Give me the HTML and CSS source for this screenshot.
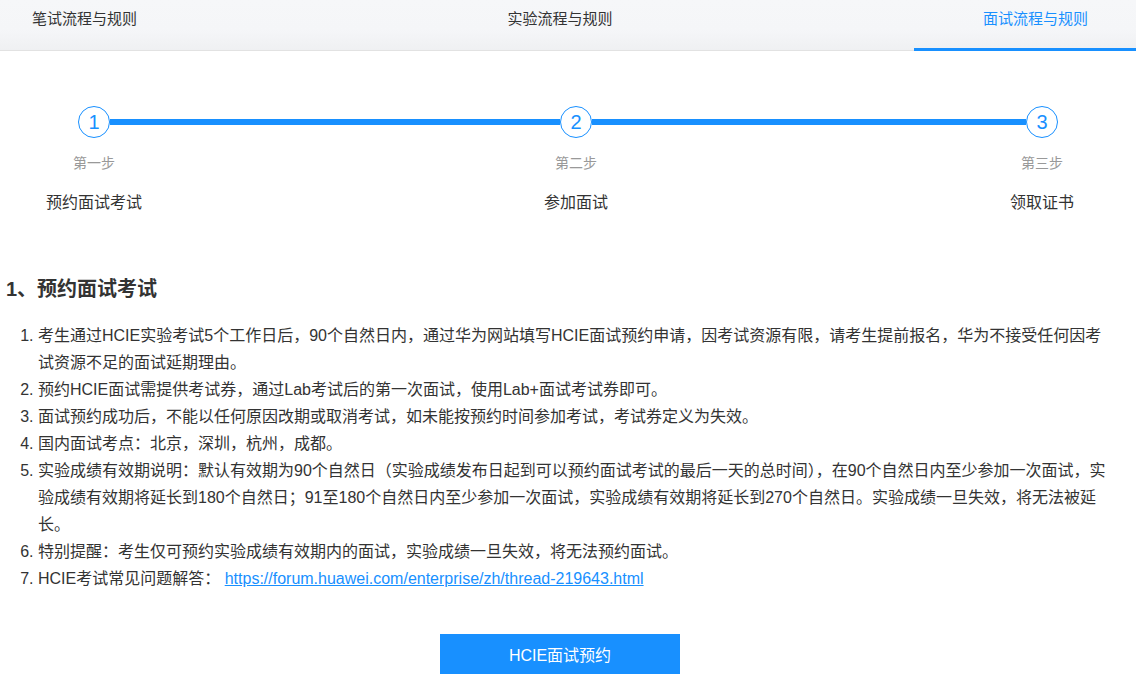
FILE: index.html
```html
<!DOCTYPE html>
<html lang="zh-CN">
<head>
<meta charset="utf-8">
<title>面试流程与规则</title>
<link rel="stylesheet" href="styles.css">
</head>
<body>
<nav class="tabs">
  <div class="tab tab-first">笔试流程与规则</div>
  <div class="tab tab-mid">实验流程与规则</div>
  <div class="tab tab-last active">面试流程与规则</div>
</nav>
<main class="page">
  <section class="steps">
    <div class="step step-first">
      <div class="step-head"><span class="num">1</span></div>
      <div class="step-tag">第一步</div>
      <div class="step-label">预约面试考试</div>
    </div>
    <div class="connector"></div>
    <div class="step">
      <div class="step-head"><span class="num">2</span></div>
      <div class="step-tag">第二步</div>
      <div class="step-label">参加面试</div>
    </div>
    <div class="connector"></div>
    <div class="step step-last">
      <div class="step-head"><span class="num">3</span></div>
      <div class="step-tag">第三步</div>
      <div class="step-label">领取证书</div>
    </div>
  </section>
  <section class="rules">
    <h2 class="rules-title">1、预约面试考试</h2>
    <ol class="rules-list">
      <li>考生通过HCIE实验考试5个工作日后，90个自然日内，通过华为网站填写HCIE面试预约申请，因考试资源有限，请考生提前报名，华为不接受任何因考试资源不足的面试延期理由。</li>
      <li>预约HCIE面试需提供考试券，通过Lab考试后的第一次面试，使用Lab+面试考试券即可。</li>
      <li>面试预约成功后，不能以任何原因改期或取消考试，如未能按预约时间参加考试，考试券定义为失效。</li>
      <li>国内面试考点：北京，深圳，杭州，成都。</li>
      <li>实验成绩有效期说明：默认有效期为90个自然日（实验成绩发布日起到可以预约面试考试的最后一天的总时间），在90个自然日内至少参加一次面试，实验成绩有效期将延长到180个自然日；91至180个自然日内至少参加一次面试，实验成绩有效期将延长到270个自然日。实验成绩一旦失效，将无法被延长。</li>
      <li>特别提醒：考生仅可预约实验成绩有效期内的面试，实验成绩一旦失效，将无法预约面试。</li>
      <li>HCIE考试常见问题解答： <a class="link" href="#">https://forum.huawei.com/enterprise/zh/thread-219643.html</a></li>
    </ol>
  </section>
  <div class="actions">
    <button class="btn-primary" type="button">HCIE面试预约</button>
  </div>
</main>
</body>
</html>
```
FILE: styles.css
```css
* { box-sizing: border-box; }
html, body { margin: 0; padding: 0; background: #fff; }
body {
  font-family: "Liberation Sans", "Noto Sans CJK SC", sans-serif;
  color: #333;
}

.tabs {
  display: grid;
  grid-template-columns: 222px 1fr 222px;
  height: 51px;
  background: linear-gradient(#f6f7f9 0%, #f5f6f8 60%, #eff0f2 100%);
  border-bottom: 1px solid #e2e2e2;
}
.tab {
  font-size: 15px;
  line-height: 20px;
  padding-top: 9px;
  color: #333;
  white-space: nowrap;
}
.tab-first { padding-left: 32px; }
.tab-mid { text-align: center; padding-right: 16px; }
.tab-last { padding-left: 69px; }
.tab.active {
  color: #1890ff;
  border-bottom: 3px solid #1890ff;
  margin-bottom: -1px;
}

.page { width: 1120px; }

.steps {
  display: flex;
  align-items: flex-start;
  padding: 55px 46px 0;
}
.step {
  display: flex;
  flex-direction: column;
  align-items: center;
}
.step-head {
  width: 100%;
  display: flex;
  align-items: center;
}
.step-head::before,
.step-head::after {
  content: "";
  flex: 1;
  height: 6px;
  background: #1890ff;
}
.step-first .step-head::before { background: transparent; }
.step-last .step-head::after { background: transparent; }
.num {
  width: 32px;
  height: 32px;
  border: 1px solid #1890ff;
  border-radius: 50%;
  display: flex;
  align-items: center;
  justify-content: center;
  color: #1890ff;
  font-size: 20px;
  background: #fff;
}
.connector {
  flex: 1;
  height: 6px;
  margin-top: 13px;
  background: #1890ff;
}
.step-tag {
  margin-top: 15px;
  font-size: 14px;
  line-height: 20px;
  color: #999;
  white-space: nowrap;
}
.step-label {
  margin-top: 19px;
  font-size: 16px;
  line-height: 22px;
  color: #333;
  white-space: nowrap;
}

.rules { padding: 0 6px; }
.rules-title {
  margin: 61px 0 0;
  font-size: 20px;
  line-height: 28px;
  font-weight: bold;
  color: #333;
}
.rules-list {
  margin: 19px 0 0;
  padding-left: 32px;
  font-size: 16px;
  line-height: 27px;
  color: #333;
}
.link {
  color: #1890ff;
  text-decoration: underline;
}

.actions {
  display: flex;
  justify-content: center;
  margin-top: 42px;
}
.btn-primary {
  width: 240px;
  height: 40px;
  border: none;
  background: #1890ff;
  color: #fff;
  font-family: "Liberation Sans", "Noto Sans CJK SC", sans-serif;
  font-size: 16px;
  padding: 0;
  cursor: pointer;
}
```
